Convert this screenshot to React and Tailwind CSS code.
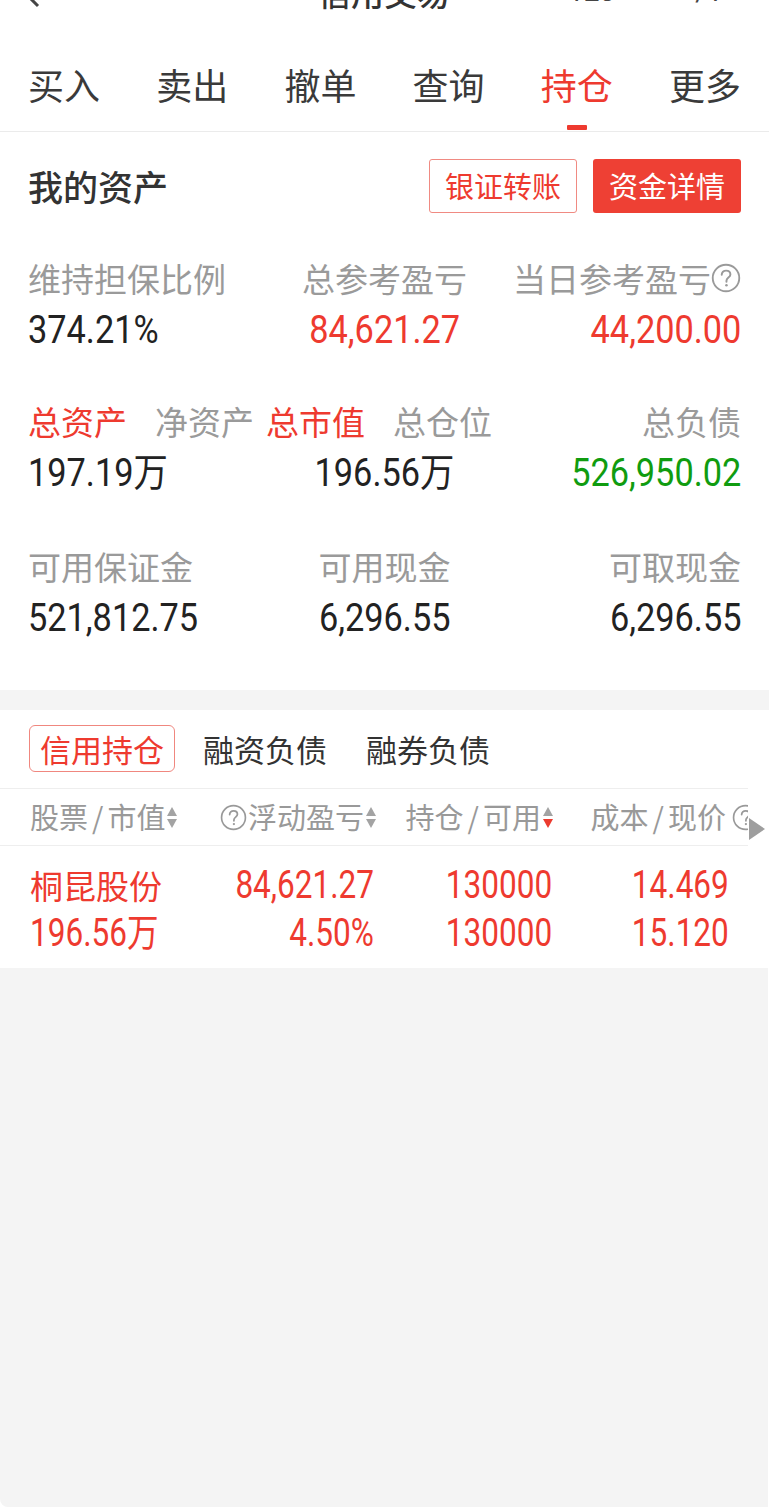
import React from "react";

const CJK = "font-['Noto_Sans_CJK_SC',sans-serif]";
const ROBO = "font-['Roboto','Noto_Sans_CJK_SC',sans-serif]";

function Help({ size = 26, className = "" }) {
  return (
    <svg width={size} height={size} viewBox="0 0 26 26" className={className}>
      <circle cx="13" cy="13" r="11.5" fill="none" stroke="currentColor" strokeWidth="1.6" />
      <path d="M9.3 10.2c0-2.2 1.6-3.6 3.8-3.6s3.7 1.3 3.7 3.3c0 2.6-3.4 2.9-3.4 5.4v0.9" fill="none" stroke="currentColor" strokeWidth="1.7" strokeLinecap="round" />
      <circle cx="13.4" cy="19.3" r="1.1" fill="currentColor" />
    </svg>
  );
}

function Sort({ down = false }) {
  return (
    <span className="ml-[2px] inline-flex flex-col items-center gap-[3px]">
      <svg width="10" height="9" viewBox="0 0 10 9"><path d="M5 0L10 9H0z" fill="#a3a3a3" /></svg>
      <svg width="10" height="9" viewBox="0 0 10 9"><path d="M0 0h10L5 9z" fill={down ? "#ec3b2f" : "#a3a3a3"} /></svg>
    </span>
  );
}

/* condensed numerals (DIN-like): Roboto narrowed */
function Num({ children, align = "left", big = true, className = "" }) {
  const o = align === "left" ? "origin-left" : align === "center" ? "origin-center" : "origin-right";
  const s = big ? "text-[39px] leading-[40px] scale-x-[0.88]" : "text-[38px] leading-[48px] scale-x-[0.83]";
  return <span className={`${ROBO} inline-block shrink-0 whitespace-nowrap ${s} ${o} ${className}`}>{children}</span>;
}

function Group({ label, value, align = "left", valueCls = "text-[#222]" }) {
  const a = align === "left" ? "items-start" : align === "center" ? "items-center" : "items-end";
  const j = align === "left" ? "justify-start" : align === "center" ? "justify-center" : "justify-end";
  return (
    <div className={`flex flex-col ${a}`}>
      <div className="text-[33px] leading-[32px] text-[#9a9a9a] whitespace-nowrap flex items-center">{label}</div>
      <div className={`mt-[16px] h-[40px] flex ${j}`}>
        <Num align={align} className={valueCls}>{value}</Num>
      </div>
    </div>
  );
}

function Cell({ w, children }) {
  return <div className={`${w} shrink-0 flex justify-end`}>{children}</div>;
}

export default function App() {
  const tabs = ["买入", "卖出", "撤单", "查询", "持仓", "更多"];
  return (
    <div className={`${CJK} w-[769px] min-h-[1510px] bg-white flex flex-col`}>
      {/* clipped title bar */}
      <div className="h-[10px] overflow-hidden">
        <div className="h-[44px] mt-[-30px] flex items-center text-[#333]">
          <svg width="60" height="44" viewBox="0 0 60 44" className="shrink-0">
            <path d="M38 8L24 22L38 36" fill="none" stroke="#444" strokeWidth="3" />
          </svg>
          <div className="ml-[258px] text-[33px] leading-[44px] font-medium">信用交易</div>
          <div className={`${ROBO} ml-[118px] text-[28px] leading-[44px] text-[#444]`}>123</div>
          <div className={`${ROBO} ml-[80px] text-[28px] leading-[44px] text-[#444]`}>/1</div>
        </div>
      </div>

      {/* tabs */}
      <div className="h-[122px] border-b border-[#ebebeb] flex pt-[52px]">
        {tabs.map((t) => (
          <div key={t} className="flex-1 flex flex-col items-center">
            <div className={`text-[36px] leading-[44px] ${t === "持仓" ? "text-[#ee3a2f]" : "text-[#3a3a3a]"}`}>{t}</div>
            {t === "持仓" && <div className="mt-[19px] w-[20px] h-[5px] bg-[#ee3a2f] rounded-[1px]" />}
          </div>
        ))}
      </div>

      {/* assets */}
      <div className="px-[28px] pt-[27px] pb-[52px]">
        <div className="flex items-center">
          <div className="text-[35px] leading-[54px] font-medium text-[#333]">我的资产</div>
          <div className="ml-auto flex gap-[16px]">
            <div className="w-[148px] h-[54px] border border-[#f08a82] rounded-[3px] flex items-center justify-center text-[29px] text-[#ee3a2f]">银证转账</div>
            <div className="w-[148px] h-[54px] bg-[#ee4034] rounded-[3px] flex items-center justify-center text-[29px] text-white">资金详情</div>
          </div>
        </div>

        <div className="mt-[49px] grid grid-cols-3">
          <Group label="维持担保比例" value="374.21%" />
          <Group label="总参考盈亏" value="84,621.27" align="center" valueCls="text-[#ee3a2f]" />
          <Group
            label={<>当日参考盈亏<Help size={30} className="text-[#9a9a9a]" /></>}
            value="44,200.00"
            align="right"
            valueCls="text-[#ee3a2f]"
          />
        </div>

        <div className="mt-[55px]">
          <div className="flex text-[33px] leading-[32px] text-[#9a9a9a] whitespace-nowrap">
            <span className="text-[#ee3a2f]">总资产</span>
            <span className="ml-[28px]">净资产</span>
            <span className="ml-[12px] text-[#ee3a2f]">总市值</span>
            <span className="ml-[28px]">总仓位</span>
            <span className="ml-auto">总负债</span>
          </div>
          <div className="mt-[16px] h-[40px] grid grid-cols-3 text-[#222]">
            <div className="flex justify-start"><Num>197.19万</Num></div>
            <div className="flex justify-center"><Num align="center">196.56万</Num></div>
            <div className="flex justify-end"><Num align="right" className="text-[#109c10]">526,950.02</Num></div>
          </div>
        </div>

        <div className="mt-[57px] grid grid-cols-3">
          <Group label="可用保证金" value="521,812.75" />
          <Group label="可用现金" value="6,296.55" align="center" />
          <Group label="可取现金" value="6,296.55" align="right" />
        </div>
      </div>

      <div className="h-[20px] bg-[#f4f4f4]" />

      {/* positions */}
      <div className="pt-[15px] pb-[11px] relative">
        <div className="pl-[29px] flex gap-[17px] text-[31px] leading-[45px]">
          <div className="px-[10px] border border-[#f0877f] rounded-[6px] text-[#ee3a2f]">信用持仓</div>
          <div className="px-[10px] border border-transparent text-[#333]">融资负债</div>
          <div className="px-[10px] border border-transparent text-[#333]">融券负债</div>
        </div>
        <div className="w-[748px] overflow-hidden">
          <div className="mt-[16px] border-t border-b border-[#eeeeee] h-[58px] flex items-center text-[29px] text-[#999] whitespace-nowrap">
            <div className="w-[220px] shrink-0 pl-[30px] flex items-center">股票<span className="mx-[4px]">/</span>市值<Sort /></div>
            <div className="w-[156px] shrink-0 flex items-center justify-end"><Help size={27} className="mr-[1px]" />浮动盈亏<Sort /></div>
            <div className="w-[177px] shrink-0 flex items-center justify-end">持仓<span className="mx-[4px]">/</span>可用<Sort down /></div>
            <div className="w-[206px] shrink-0 flex items-center justify-end">成本<span className="mx-[4px]">/</span>现价<Help size={27} className="ml-[6px]" /></div>
          </div>
          <div className="mt-[15px] text-[#ee3a2f]">
            <div className="flex h-[48px] items-center">
              <div className="w-[220px] shrink-0 pl-[30px] text-[33px] leading-[48px]">桐昆股份</div>
              <Cell w="w-[154px]"><Num big={false} align="right">84,621.27</Num></Cell>
              <Cell w="w-[178px]"><Num big={false} align="right">130000</Num></Cell>
              <Cell w="w-[177px]"><Num big={false} align="right">14.469</Num></Cell>
            </div>
            <div className="flex h-[48px] items-center">
              <div className="w-[220px] shrink-0 pl-[30px]"><Num big={false}>196.56万</Num></div>
              <Cell w="w-[154px]"><Num big={false} align="right">4.50%</Num></Cell>
              <Cell w="w-[178px]"><Num big={false} align="right">130000</Num></Cell>
              <Cell w="w-[177px]"><Num big={false} align="right">15.120</Num></Cell>
            </div>
          </div>
        </div>
        <svg width="16" height="22" viewBox="0 0 16 22" className="absolute left-[749px] top-[108px]">
          <path d="M0 0L16 11L0 22z" fill="#9e9e9e" />
        </svg>
      </div>

      <div className="flex-1 bg-[#f4f4f4] mr-[1px] mb-[3px] rounded-bl-[8px]" />
    </div>
  );
}
